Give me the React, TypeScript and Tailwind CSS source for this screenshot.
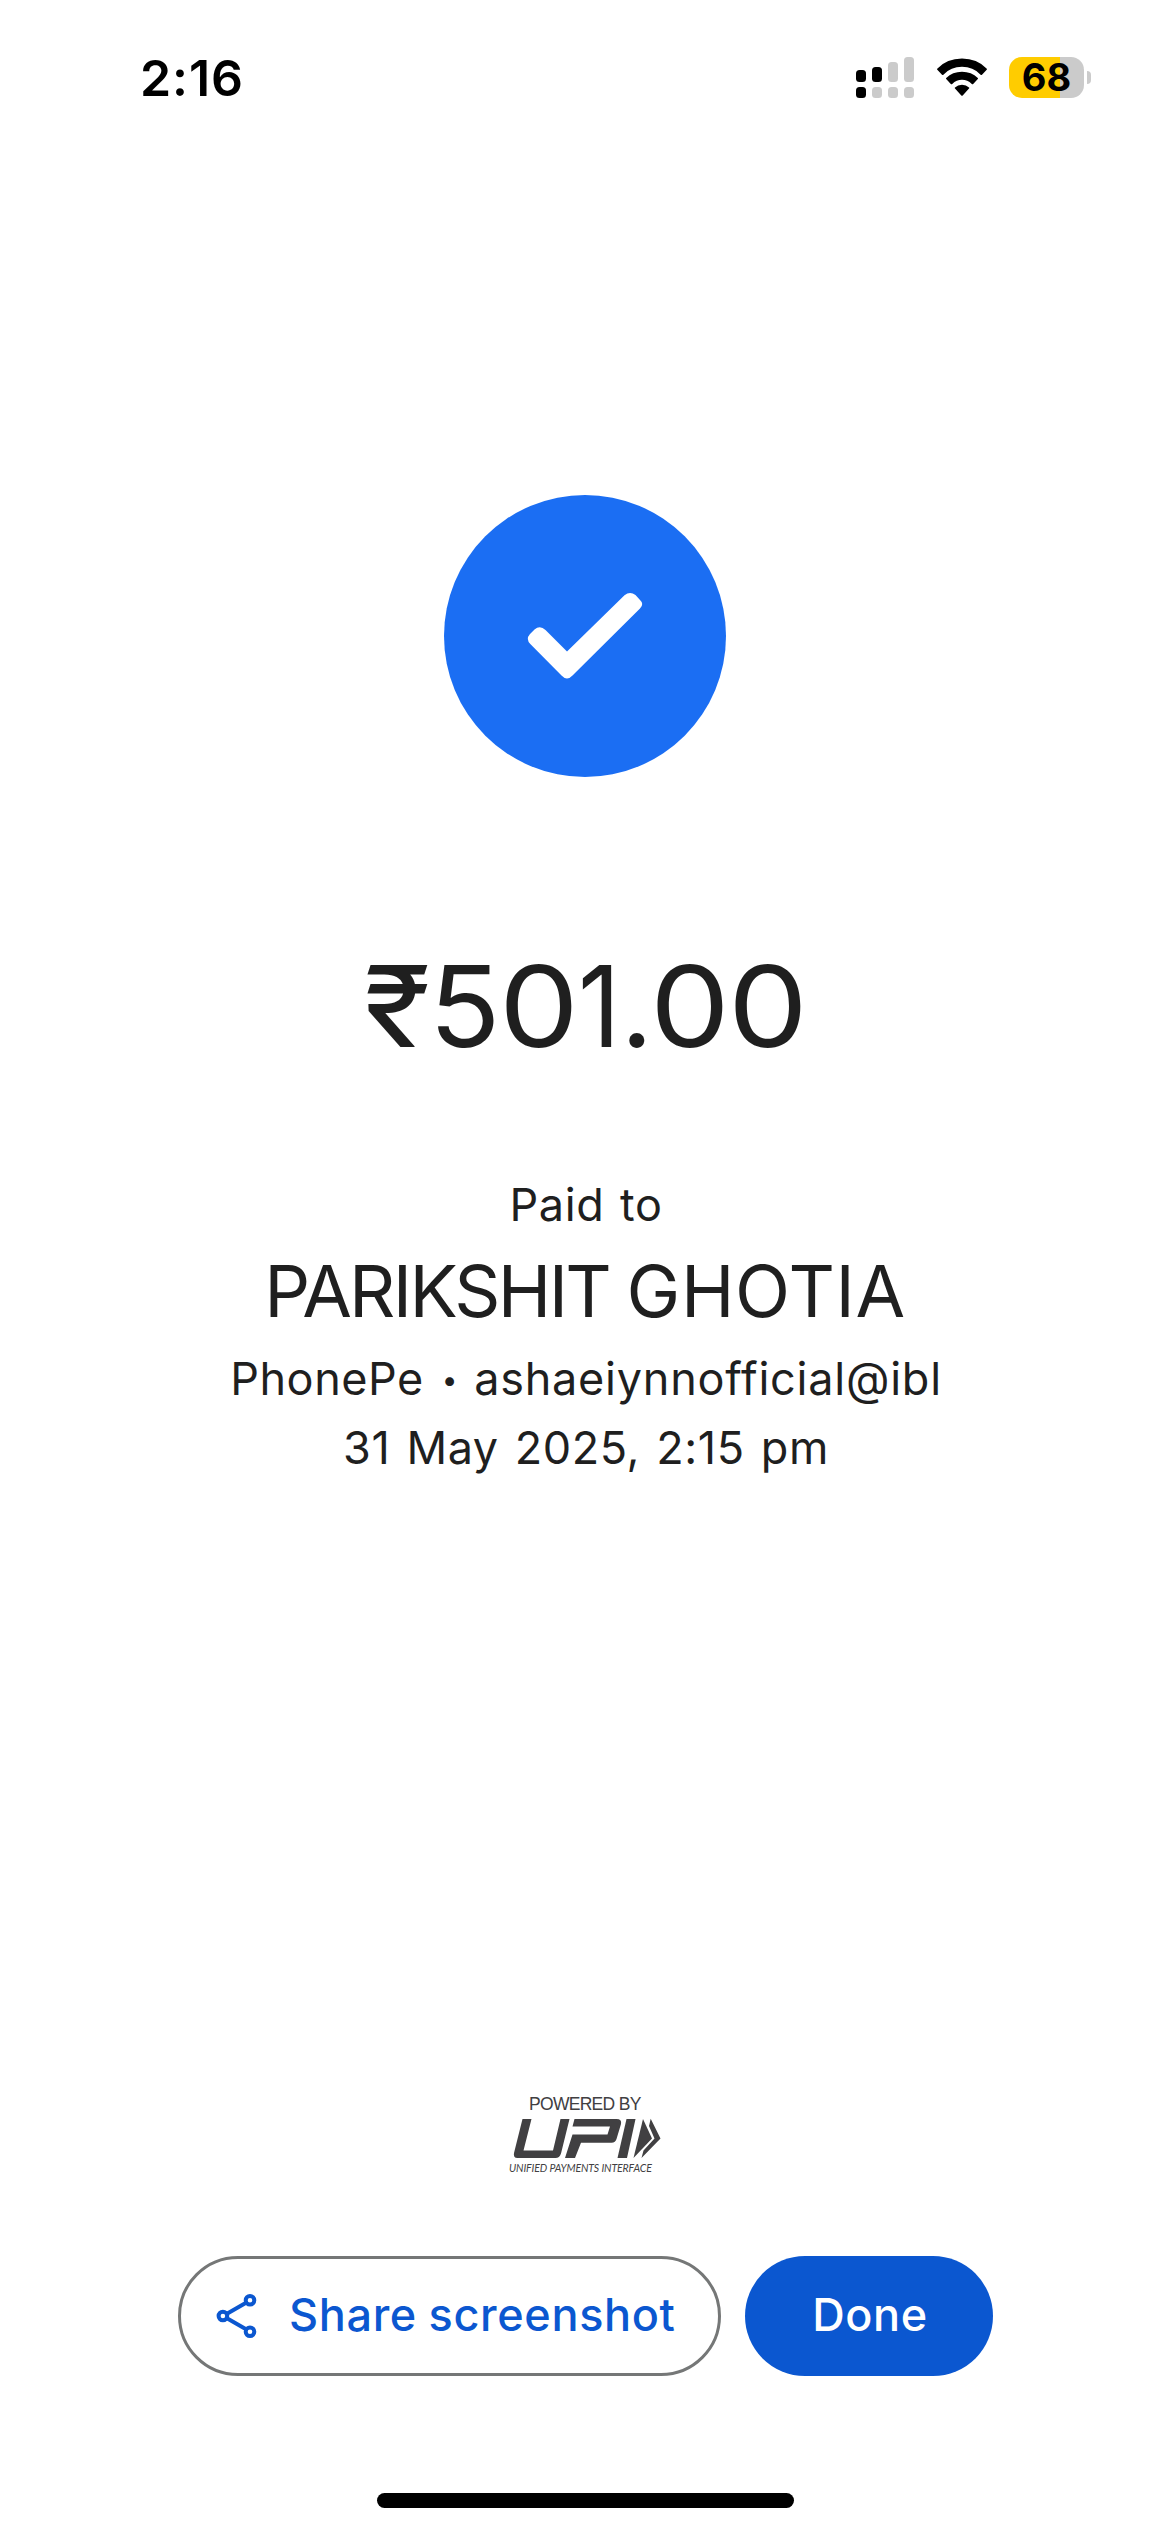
const bars = [
  { h: "h-[12px]", top: "bg-black", dot: "bg-black" },
  { h: "h-[15px]", top: "bg-black", dot: "bg-[#cbcbcb]" },
  { h: "h-[20px]", top: "bg-[#cbcbcb]", dot: "bg-[#cbcbcb]" },
  { h: "h-[25px]", top: "bg-[#cbcbcb]", dot: "bg-[#cbcbcb]" },
];

function Signal() {
  return (
    <div className="flex h-[41px] items-end gap-[6px]">
      {bars.map((b, i) => (
        <div key={i} className="flex w-[10px] flex-col gap-[5px]">
          <div className={`rounded-[3.5px] ${b.h} ${b.top}`} />
          <div className={`h-[11px] rounded-[3.5px] ${b.dot}`} />
        </div>
      ))}
    </div>
  );
}

function Wifi() {
  return (
    <svg
      className="ml-[21.5px] mt-px h-[38.4px] w-[52px]"
      viewBox="0 2.2 52 36"
      preserveAspectRatio="none"
      fill="#000"
    >
      <path d="M1.200 12.200Q11 2.700 26 2.700T50.800 12.200Q51.200 12.700 50.700 13.200L46 17.800Q45.300 18.400 44.600 17.800Q37 10.500 26 10.500T7.400 17.800Q6.700 18.400 6 17.800L1.300 13.200Q0.800 12.700 1.200 12.200Z" />
      <path d="M10.200 21Q16.500 15.200 26 15.200T41.800 21Q42.300 21.500 41.800 22L37.200 26.500Q36.500 27.100 35.800 26.500Q31.500 22.700 26 22.700T16.200 26.500Q15.500 27.100 14.800 26.500L10.200 22Q9.700 21.500 10.200 21Z" />
      <path d="M19 29.800Q21.800 27.200 26 27.200T33 29.800Q33.500 30.300 33 30.800L26.700 37.400Q26 38 25.300 37.400L19 30.800Q18.500 30.300 19 29.800Z" />
    </svg>
  );
}

function Battery() {
  return (
    <div className="ml-[21.5px] flex items-center">
      <div className="flex h-[41px] w-[75px] items-center justify-center rounded-[13px] bg-linear-to-r from-[#ffcc00] from-[68%] to-[#cbcbcb] to-[68%]">
        <span className="text-[38px] font-bold leading-[41px]">68</span>
      </div>
      <div className="ml-[3px] h-[13px] w-[4px] rounded-r-full bg-[#cbcbcb]" />
    </div>
  );
}

function Amount() {
  return (
    <h1 className="mr-[6.7px] mt-[159px] flex text-[113px] font-[370] leading-[140px]">
      <span className="origin-left scale-x-109">₹</span>
      <span className="ml-[3.8px] origin-left scale-x-104">5</span>
      <span className="ml-[0.9px] origin-left scale-x-112">0</span>
      <span className="ml-[7.8px] origin-left scale-x-92">1</span>
      <span className="ml-[-3.4px]">.</span>
      <span className="ml-[-3.3px] origin-left scale-x-112">0</span>
      <span className="ml-[6.7px] origin-left scale-x-112">0</span>
    </h1>
  );
}

function UpiLogo() {
  return (
    <div className="flex w-[160px] flex-col text-[#414042]">
      <p className="ml-[24px] whitespace-nowrap font-['Liberation_Sans',sans-serif] text-[17.5px] leading-[18px] tracking-[-0.7px]">
        POWERED BY
      </p>
      <svg className="-mt-px h-[50px] w-[160px]" viewBox="0 0 160 50" fill="currentColor">
        <path d="M17.500 7H26.500L18.500 38.500H48L55.500 7H64.500L56 41.500Q54.500 46 50.500 46H12.500Q8 46 9 41Z" />
        <path d="M69.500 7H111.500Q117 7 116 12L111.500 27Q110.500 30.700 106.500 30.700H76L70 46H60L67.500 22.500H102.500L105 14.500H67.500Z" />
        <path d="M121.500 7H130.500L122 46H112.500Z" />
        <path d="M138 7L147 26.500L128.500 46Z" />
        <path d="M145.700 6.800L155.500 26.500L136.500 46L138.500 38.500L149.500 26.500L144 14Z" />
      </svg>
      <p className="-mt-px ml-[4px] whitespace-nowrap font-['Lato',sans-serif] text-[10.5px] italic leading-[14px] tracking-[-0.12px]">
        UNIFIED PAYMENTS INTERFACE
      </p>
    </div>
  );
}

export default function App() {
  return (
    <main className="flex h-[2532px] w-[1170px] flex-col items-center overflow-hidden bg-white font-['Inter',sans-serif] text-[#1f1f1f]">
      <header className="flex h-[108px] w-full items-start justify-between pl-[140px] pr-[79px] pt-[48px] text-black">
        <span className="text-[50px] font-semibold leading-[60px] tracking-[0.9px]">2:16</span>
        <div className="mt-[9px] flex items-start">
          <Signal />
          <Wifi />
          <Battery />
        </div>
      </header>

      <svg className="mt-[387px] size-[282px] shrink-0" viewBox="0 0 282 282">
        <circle cx="141" cy="141" r="141" fill="#1b6ef3" />
        <path
          d="M123 156.500L101.500 135Q96 129.800 90.500 134.500L86 139Q81.500 144 86.300 149L117.500 180.500Q123 186.500 128.500 180.500L196 113.500Q200.500 109 196 105L191.500 100Q186 96 180.500 100.200Z"
          fill="#fff"
        />
      </svg>

      <Amount />

      <section className="mt-[99px] flex flex-col items-center whitespace-nowrap text-[45px] leading-[60px]">
        <p className="ml-[2px] tracking-[0.6px] [word-spacing:2.5px]">Paid to</p>
        <h2 className="mt-[2px] flex gap-[17.5px] text-[72px] font-[370] leading-[108px]">
          <span className="tracking-[-2.7px]">PARIKSHIT</span>
          <span className="tracking-[0.6px]">GHOTIA</span>
        </h2>
        <p className="ml-[2px] mt-[4px] flex h-[60px] items-baseline">
          <span className="tracking-[0.55px]">PhonePe</span>
          <span className="ml-[17.8px] mr-[16.7px] -translate-y-[5px] text-[28px]">•</span>
          <span className="tracking-[0.77px]">ashaeiynnofficial@ibl</span>
        </p>
        <p className="ml-[2px] mt-[9px] tracking-[0.6px] [word-spacing:2.8px]">31 May 2025, 2:15 pm</p>
      </section>

      <div className="mt-[617px]">
        <UpiLogo />
      </div>

      <div className="ml-px mt-[81px] flex gap-[24px]">
        <button className="flex h-[120px] w-[543px] items-center rounded-full border-[3px] border-[#757777] pl-[35px] text-[#0b57d0]">
          <svg className="size-[46px] shrink-0" viewBox="0 0 46 46" fill="none" stroke="currentColor" strokeWidth="4">
            <path d="M10.500 21L30.500 9.500M10.500 25L30.500 36.500" />
            <circle cx="6.900" cy="23" r="4.300" />
            <circle cx="34" cy="7.300" r="4.300" />
            <circle cx="34" cy="38.700" r="4.300" />
          </svg>
          <span className="ml-[27px] whitespace-nowrap pb-[3px] text-[45px] font-medium tracking-[0.65px] [word-spacing:-1px]">
            Share screenshot
          </span>
        </button>
        <button className="h-[120px] w-[248px] rounded-full bg-[#0b57d0] pb-[3px] pl-[2px] text-[45px] font-medium tracking-[0.6px] text-white">
          Done
        </button>
      </div>

      <div className="mb-[24px] ml-px mt-auto h-[15px] w-[417px] shrink-0 rounded-full bg-black" />
    </main>
  );
}
